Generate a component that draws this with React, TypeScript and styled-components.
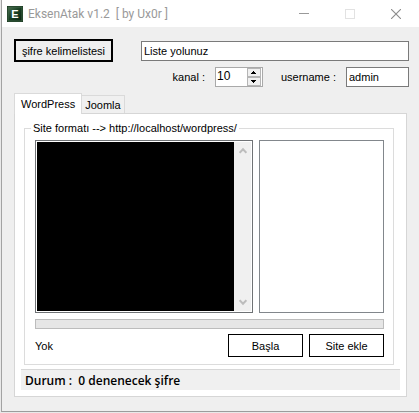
import React, { useState } from "react";
import styled, { createGlobalStyle } from "styled-components";

const GlobalStyle = createGlobalStyle`
  * { box-sizing: border-box; }
  body {
    margin: 0;
    background: #e9e9e9;
    color: #000;
    font: 11px/14px "Liberation Sans", Arial, sans-serif;
  }
  button, input, textarea { font: inherit; color: inherit; margin: 0; border-radius: 0; }
  button, input, textarea { outline: none; }
`;

const Window = styled.main`
  margin: 0 0 1px 1px;
  border-left: 1px solid #a3a3a3;
  border-bottom: 1px solid #9c9c9c;
  background: #efefef;
`;

const TitleBar = styled.header`
  display: flex;
  align-items: center;
  height: 27px;
  padding-left: 5px;
  background: #fff;
`;

const Title = styled.h1`
  flex: 1;
  margin: 0 0 0 5px;
  font: 12px/26px Roboto, "Open Sans", sans-serif;
  color: #999;
  white-space: pre;
`;

const CaptionButton = styled.button`
  display: grid;
  place-items: center;
  width: 46px;
  height: 27px;
  padding: 0;
  border: 0;
  background: transparent;
`;

const Content = styled.div`
  padding: 12px 10px 14px 12px;
`;

const TopRow = styled.div`
  display: flex;
  align-items: center;
  gap: 28px;
`;

const Button = styled.button<{ $thick?: boolean }>`
  flex: none;
  width: ${(p) => (p.$thick ? 99 : 75)}px;
  height: 23px;
  padding: 0;
  border: ${(p) => (p.$thick ? 2 : 1)}px solid #000;
  background: ${(p) => (p.$thick ? "#efefef" : "#fff")};
`;

const TextBox = styled.input<{ $short?: boolean }>`
  flex: ${(p) => (p.$short ? "0 0 63px" : "1")};
  min-width: 0;
  height: 20px;
  padding: 0 2px;
  border: 1px solid #7a7a7a;
  background: #fff;
`;

const FieldRow = styled.div`
  display: flex;
  justify-content: flex-end;
  align-items: center;
  gap: 18px;
  margin-top: 5px;
`;

const Field = styled.div`
  display: flex;
  align-items: center;
  gap: 10px;
`;

const Spinner = styled.div`
  display: flex;
  width: 48px;
  height: 20px;
  border: 1px solid #a9a9a9;
  background: #fff;
`;

const SpinnerInput = styled.input`
  flex: 1;
  min-width: 0;
  padding: 0 0 2px 1px;
  border: 0;
  background: transparent;
  font-size: 12px;
`;

const SpinnerArrows = styled.div`
  display: flex;
  flex-direction: column;
  width: 15px;
`;

const ArrowButton = styled.button`
  display: grid;
  place-items: center;
  flex: 1;
  width: 14px;
  padding: 0;
  border: 1px solid #b5b5b5;
  background: #f0f0f0;
`;

const TabList = styled.div`
  display: flex;
  align-items: flex-end;
  margin-top: 6px;
`;

const Tab = styled.button<{ $active: boolean }>`
  height: ${(p) => (p.$active ? 21 : 18)}px;
  margin-bottom: ${(p) => (p.$active ? -1 : 0)}px;
  padding: ${(p) => (p.$active ? "0 6px 1px" : "0 3px")};
  border: 1px solid #dadada;
  border-bottom: 0;
  background: ${(p) => (p.$active ? "#fff" : "#f0f0f0")};
  z-index: ${(p) => (p.$active ? 1 : 0)};
  & + & { border-left: 0; }
`;

const TabPanel = styled.section`
  margin-right: 2px;
  padding: 7px 6px 6px;
  border: 1px solid #d6d6d6;
  background: #fff;
`;

const Group = styled.fieldset`
  min-width: 0;
  margin: 0 6px 0 3px;
  padding: 5px 9px 7px 10px;
  border: 1px solid #dcdcdc;
`;

const Legend = styled.legend`
  margin-left: -4px;
  padding: 0 2px;
`;

const Lists = styled.div`
  display: flex;
  gap: 6px;
  height: 173px;
`;

const LogFrame = styled.div`
  display: flex;
  flex: 218 1 0;
  min-width: 0;
  padding: 1px;
  border: 1px solid #6f7275;
  background: #fff;
`;

const Log = styled.textarea`
  flex: 1;
  min-width: 0;
  border: 0;
  padding: 2px;
  resize: none;
  background: #000;
  color: #0f0;
`;

const Scrollbar = styled.div`
  display: flex;
  flex-direction: column;
  justify-content: space-between;
  width: 17px;
  background: #f0f0f0;
`;

const ScrollButton = styled.button`
  display: grid;
  place-items: center;
  height: 17px;
  padding: 0;
  border: 0;
  background: transparent;
`;

const SiteList = styled.div`
  flex: 125 1 0;
  min-width: 0;
  border: 1px solid #82878c;
  background: #fff;
`;

const Progress = styled.div`
  height: 10px;
  margin-top: 6px;
  border: 1px solid #bcbcbc;
  background: #e6e6e6;
`;

const Actions = styled.div`
  display: flex;
  align-items: center;
  gap: 6px;
  margin-top: 5px;
`;

const Result = styled.span`
  flex: 1;
`;

const StatusBar = styled.footer`
  height: 21px;
  margin-top: 4px;
  padding-left: 4px;
  border-top: 1px solid #d7d7d7;
  background: #f0f0f0;
  font: 600 12px/21px "Open Sans", "Noto Sans", sans-serif;
  white-space: pre;
`;

const AppIcon = () => (
  <svg width="16" height="16" viewBox="0 0 16 16" aria-hidden="true">
    <defs>
      <linearGradient id="tile" x1="0" y1="0" x2="1" y2="1">
        <stop offset="0" stopColor="#4b7050" />
        <stop offset="0.5" stopColor="#173d22" />
        <stop offset="1" stopColor="#0b2312" />
      </linearGradient>
    </defs>
    <rect width="16" height="16" fill="#15301b" />
    <rect x="1" y="1" width="14" height="14" fill="url(#tile)" stroke="#3c6245" strokeWidth="1" />
    <text x="8" y="12" textAnchor="middle" fontFamily="Liberation Sans, sans-serif" fontSize="11" fontWeight="bold" fill="#fff">E</text>
  </svg>
);

const Triangle = ({ down }: { down?: boolean }) => (
  <svg width="5" height="3" viewBox="0 0 5 3" shapeRendering="crispEdges" aria-hidden="true">
    <path d={down ? "M0 0h5v1H0zM1 1h3v1H1zM2 2h1v1H2z" : "M2 0h1v1H2zM1 1h3v1H1zM0 2h5v1H0z"} />
  </svg>
);

const Chevron = ({ down }: { down?: boolean }) => (
  <svg width="8" height="7" viewBox="0 0 8 7" fill="none" stroke="#bdbdbd" strokeWidth="2" aria-hidden="true">
    <path d={down ? "M.6 1.2 4 4.8 7.4 1.2" : "M.6 5.8 4 2.2 7.4 5.8"} />
  </svg>
);

const tabs = ["WordPress", "Joomla"];

export default function App() {
  const [active, setActive] = useState("WordPress");
  const [channels, setChannels] = useState(10);

  return (
    <>
      <GlobalStyle />
      <Window>
        <TitleBar>
          <AppIcon />
          <Title>{"EksenAtak v1.2  [ by Ux0r ]"}</Title>
          <CaptionButton aria-label="Minimize">
            <svg width="10" height="10" shapeRendering="crispEdges"><path d="M0 4.5h10" stroke="#999" /></svg>
          </CaptionButton>
          <CaptionButton aria-label="Maximize" disabled>
            <svg width="10" height="10" shapeRendering="crispEdges"><rect x=".5" y=".5" width="9" height="9" fill="none" stroke="#e2e2e2" /></svg>
          </CaptionButton>
          <CaptionButton aria-label="Close">
            <svg width="10" height="10"><path d="M0 0l10 10M10 0L0 10" stroke="#8c8c8c" strokeWidth="1.1" /></svg>
          </CaptionButton>
        </TitleBar>
        <Content>
          <TopRow>
            <Button $thick>şifre kelimelistesi</Button>
            <TextBox aria-label="Liste yolu" defaultValue="Liste yolunuz" />
          </TopRow>
          <FieldRow>
            <Field>
              <label htmlFor="channels">kanal :</label>
              <Spinner>
                <SpinnerInput
                  id="channels"
                  inputMode="numeric"
                  value={channels}
                  onChange={(e) => setChannels(Number(e.target.value) || 0)}
                />
                <SpinnerArrows>
                  <ArrowButton aria-label="+" onClick={() => setChannels(channels + 1)}><Triangle /></ArrowButton>
                  <ArrowButton aria-label="-" onClick={() => setChannels(Math.max(0, channels - 1))}><Triangle down /></ArrowButton>
                </SpinnerArrows>
              </Spinner>
            </Field>
            <Field>
              <label htmlFor="username">username :</label>
              <TextBox $short id="username" defaultValue="admin" />
            </Field>
          </FieldRow>
          <TabList role="tablist">
            {tabs.map((name) => (
              <Tab key={name} role="tab" aria-selected={name === active} $active={name === active} onClick={() => setActive(name)}>
                {name}
              </Tab>
            ))}
          </TabList>
          <TabPanel role="tabpanel">
            <Group>
              <Legend>{"Site formatı --> http://localhost/wordpress/"}</Legend>
              <Lists>
                <LogFrame>
                  <Log aria-label="Log" readOnly />
                  <Scrollbar>
                    <ScrollButton aria-label="Scroll up"><Chevron /></ScrollButton>
                    <ScrollButton aria-label="Scroll down"><Chevron down /></ScrollButton>
                  </Scrollbar>
                </LogFrame>
                <SiteList role="listbox" aria-label="Site" />
              </Lists>
              <Progress role="progressbar" aria-valuenow={0} />
              <Actions>
                <Result>Yok</Result>
                <Button>Başla</Button>
                <Button>Site ekle</Button>
              </Actions>
            </Group>
            <StatusBar>{"Durum :  0 denenecek şifre"}</StatusBar>
          </TabPanel>
        </Content>
      </Window>
    </>
  );
}
